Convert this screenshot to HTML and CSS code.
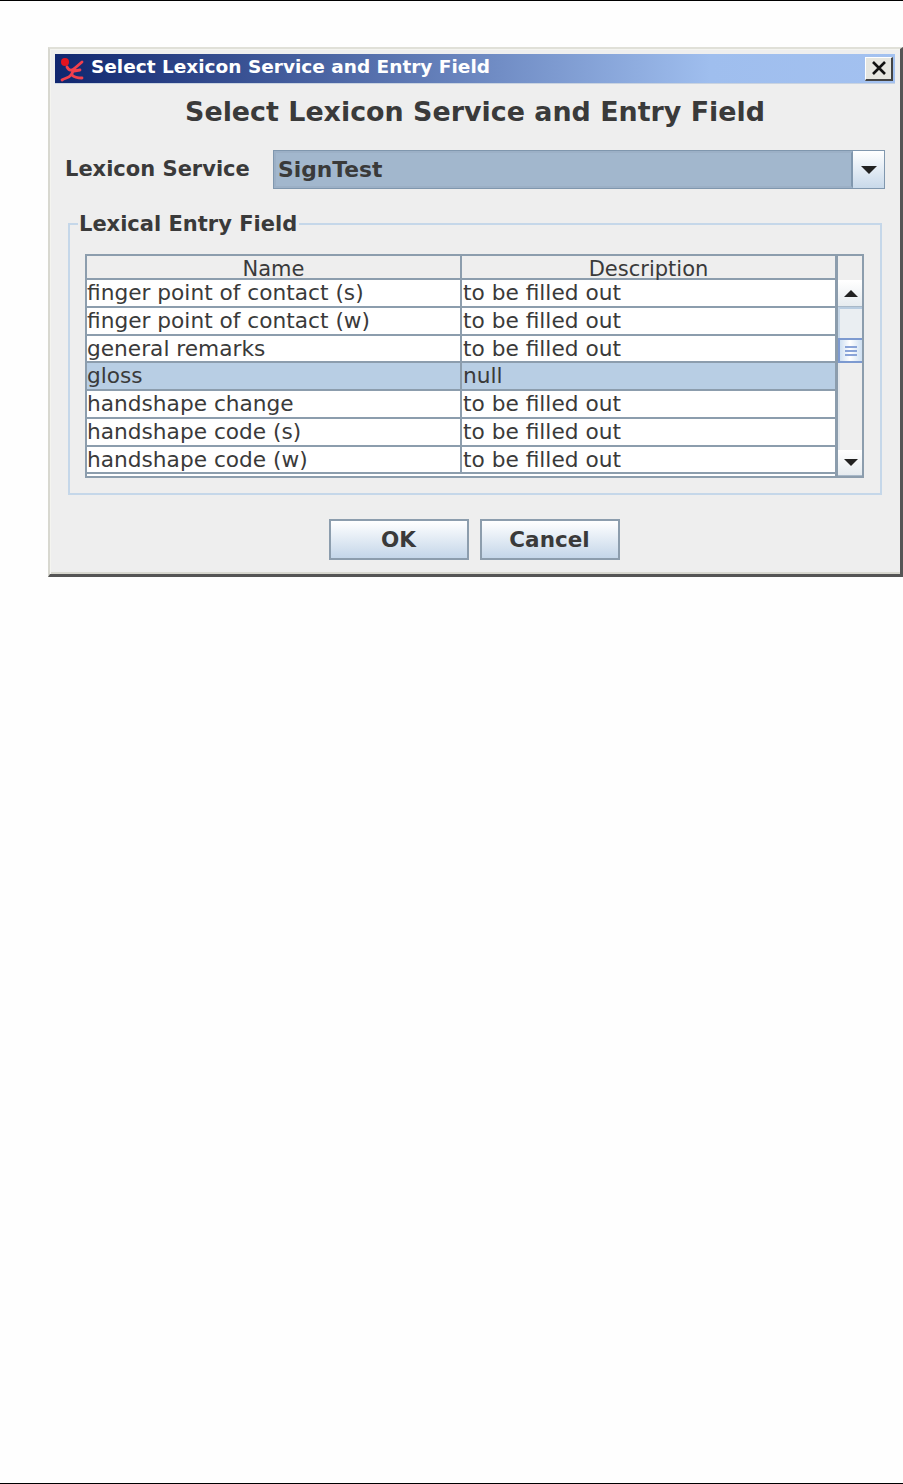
FILE: index.html
```html
<!DOCTYPE html>
<html lang="en">
<head>
  <meta charset="UTF-8">
  <title>Select Lexicon Service and Entry Field</title>
  <link rel="stylesheet" href="styles.css">
</head>
<body>

<div class="page-rule"></div>

<div class="dialog">
  <div class="titlebar">
    <svg class="app-icon" width="26" height="26" viewBox="0 0 26 26">
      <circle cx="7" cy="6" r="4" fill="#e4141f"/>
      <path d="M9 11 C11 15 14 15 17 12 L24 6 M17 12 C14 15 15 17 13 19 C11 22 7 22 4 24 M14 19 C17 22 20 22 24 22 M16 15 L22 14" fill="none" stroke="#f2404c" stroke-width="2.8" stroke-linecap="round"/>
    </svg>
    <span class="titlebar-text">Select Lexicon Service and Entry Field</span>
    <button class="close-btn">
      <svg width="18" height="16" viewBox="0 0 18 16"><path d="M3 2 L15 14 M15 2 L3 14" stroke="#111" stroke-width="2.6"/></svg>
    </button>
  </div>

  <div class="content">
    <h2 class="heading">Select Lexicon Service and Entry Field</h2>

    <div class="service-row">
      <label class="service-label">Lexicon Service</label>
      <div class="combo">
        <div class="combo-value">SignTest</div>
        <div class="combo-arrow"><span class="arrow-down"></span></div>
      </div>
    </div>

    <fieldset class="entry-field">
      <legend>Lexical Entry Field</legend>
      <div class="table-wrap">
        <div class="table">
          <div class="row header"><div class="cell">Name</div><div class="cell">Description</div></div>
          <div class="row"><div class="cell">finger point of contact (s)</div><div class="cell">to be filled out</div></div>
          <div class="row"><div class="cell">finger point of contact (w)</div><div class="cell">to be filled out</div></div>
          <div class="row"><div class="cell">general remarks</div><div class="cell">to be filled out</div></div>
          <div class="row selected"><div class="cell">gloss</div><div class="cell">null</div></div>
          <div class="row"><div class="cell">handshape change</div><div class="cell">to be filled out</div></div>
          <div class="row"><div class="cell">handshape code (s)</div><div class="cell">to be filled out</div></div>
          <div class="row"><div class="cell">handshape code (w)</div><div class="cell">to be filled out</div></div>
        </div>
        <div class="scrollbar">
          <div class="scroll-corner"></div>
          <div class="scroll-btn"><span class="arrow-up"></span></div>
          <div class="scroll-track">
            <div class="track-before"></div>
            <div class="thumb"><i></i><i></i><i></i></div>
            <div class="track-after"></div>
          </div>
          <div class="scroll-btn"><span class="arrow-down small"></span></div>
        </div>
      </div>
    </fieldset>

    <div class="buttons">
      <button class="btn">OK</button>
      <button class="btn">Cancel</button>
    </div>
  </div>
</div>

<div class="page-rule bottom"></div>

</body>
</html>
```

FILE: styles.css
```css
html, body { margin: 0; padding: 0; height: 100%; }
body { display: flex; flex-direction: column; background: #fefefe; font-family: "DejaVu Sans", sans-serif; color: #3a3a3a; overflow: hidden; }

.page-rule { height: 1px; background: #000; flex: none; }
.page-rule.bottom { margin-top: auto; }

.dialog { box-sizing: border-box; width: 855px; height: 530px; margin: 46px 0 0 48px; background: #eee; border: 2px solid #d8d8d0; border-top-color: #e0e0d8; border-right: 3px solid #555; border-bottom: 3px solid #555; padding: 5px 5px 0 5px; box-shadow: inset 1px 1px 0 #f4f4f0, inset 0 -2px 0 #d8d8d0; display: flex; flex-direction: column; }

.titlebar { height: 29px; flex: none; display: flex; align-items: center; background: linear-gradient(to right, #10266f, #9fbeee 78%, #a3c1f0); border-bottom: 1px solid #c9d3e0; }
.app-icon { margin-left: 3px; flex: none; }
.titlebar-text { margin: -4px 0 0 7px; color: #fff; font-weight: bold; font-size: 18.5px; white-space: nowrap; }
.close-btn { margin: 0 2px 0 auto; width: 28px; height: 24px; padding: 0; display: flex; align-items: center; justify-content: center; background: #e6e6e0; border: 1px solid #fff; border-right: 2px solid #444; border-bottom: 2px solid #444; }

.content { flex: 1; padding: 0 10px; display: flex; flex-direction: column; }
.heading { margin: 12px 0 0; height: 32px; line-height: 32px; text-align: center; font-size: 26.9px; font-weight: bold; white-space: nowrap; }

.service-row { display: flex; align-items: center; margin-top: 22px; flex: none; }
.service-label { width: 208px; font-weight: bold; font-size: 21px; flex: none; white-space: nowrap; margin-top: -2px; }
.combo { flex: 1; height: 39px; box-sizing: border-box; display: flex; border: 1px solid #8097ae; }
.combo-value { flex: 1; background: #a2b7cd; border: 2px solid #9cb0c6; border-right-color: #8097ae; padding-left: 2px; line-height: 33px; font-size: 21.8px; font-weight: bold; }
.combo-arrow { width: 31px; display: flex; align-items: center; justify-content: center; background: linear-gradient(#fff, #c8d9ea); }

.arrow-down { width: 0; height: 0; border-left: 8px solid transparent; border-right: 8px solid transparent; border-top: 8px solid #222; }
.arrow-down.small { border-left-width: 7px; border-right-width: 7px; border-top-width: 7px; }
.arrow-up { width: 0; height: 0; border-left: 7px solid transparent; border-right: 7px solid transparent; border-bottom: 7px solid #222; }

.entry-field { margin: 23px 3px 0 3px; padding: 18px 16px 11px 15px; height: 283px; flex: none; box-sizing: border-box; border: 2px solid #c5d7e9; min-width: 0; }
.entry-field legend { padding: 0 2px 0 1px; margin-left: -7px; font-size: 21px; font-weight: bold; line-height: 24px; }

.table-wrap { display: flex; flex: none; height: 224px; box-sizing: border-box; border: 2px solid #8c9dad; }
.table { width: 748px; flex: none; overflow: hidden; background: #fff; border-right: 1px solid #8c9dad; box-sizing: content-box; }
.row { display: grid; grid-template-columns: 375px 1fr; height: 27.75px; box-sizing: border-box; background: #fff; border-bottom: 2px solid #8c9dad; font-size: 21.7px; line-height: 26px; }
.row.header { height: 24px; background: #eee; text-align: center; font-size: 21px; line-height: 26px; }
.row.selected { background: #b8cee4; }
.cell { padding-left: 0; white-space: nowrap; border-right: 2px solid #8c9dad; }
.row .cell:last-child { border-right: 0; padding-left: 1px; }
.row.header .cell { padding-left: 0; }

.scrollbar { flex: 1; display: flex; flex-direction: column; border-left: 2px solid #8c9dad; }
.scroll-corner { height: 24px; flex: none; background: #eee; border-bottom: 1px solid #fff; }
.scroll-btn { height: 25px; flex: none; display: flex; align-items: center; justify-content: center; padding-left: 1px; background: linear-gradient(#fff, #e6ebef); border-bottom: 1px solid #a8b8c8; }
.scroll-track { flex: 1; display: flex; flex-direction: column; background: #eee; }
.track-before { height: 31px; flex: none; box-sizing: border-box; background: #eaeef2; border-top: 2px solid #b8cce0; border-left: 2px solid #c8d8e8; }
.thumb { height: 25px; flex: none; box-sizing: border-box; display: flex; flex-direction: column; justify-content: center; gap: 2px; padding: 0 5px; border: 2px solid #7d9ad0; border-right-width: 0; background: linear-gradient(to right, #cfe0f2, #fff 45%, #cfe0f2); }
.thumb i { display: block; height: 2px; background: #8aa4d8; }
.track-after { flex: 1; border-left: 2px solid #e4e8ec; }

.buttons { display: flex; justify-content: center; gap: 11px; margin: 24px 2px 0 0; flex: none; }
.btn { width: 140px; height: 41px; padding: 0; box-sizing: border-box; border: 2px solid #8c9dad; background: linear-gradient(#fff, #c4d6e9); font-family: "DejaVu Sans", sans-serif; font-size: 21.5px; font-weight: bold; color: #3a3a3a; }
```
